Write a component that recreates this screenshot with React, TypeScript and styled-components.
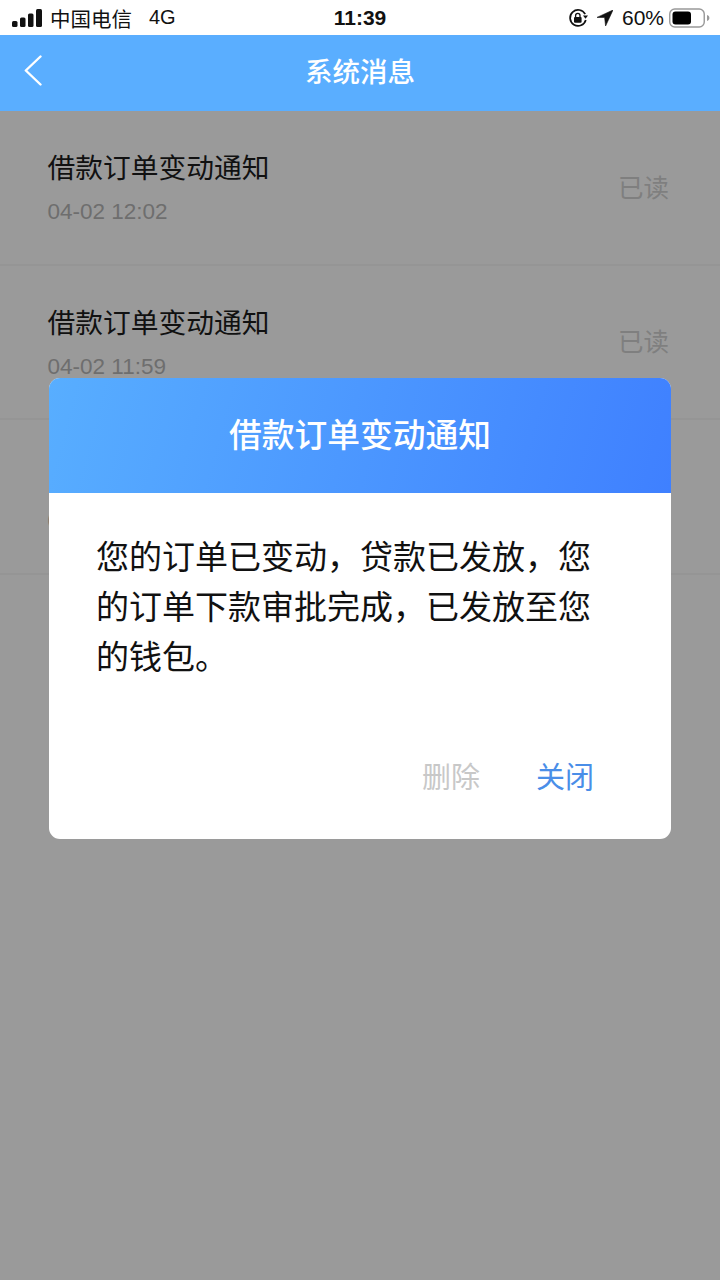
import React from "react";
import styled, { createGlobalStyle } from "styled-components";

const FONT = `"Liberation Sans", "Noto Sans CJK SC", sans-serif`;

const Global = createGlobalStyle`
  html, body { margin: 0; padding: 0; background: #9a9a9a; }
  * { box-sizing: border-box; }
`;

const Page = styled.div`
  position: relative;
  width: 720px;
  height: 1280px;
  overflow: hidden;
  display: flex;
  flex-direction: column;
  font-family: ${FONT};
`;

const StatusBar = styled.div`
  height: 35px;
  background: #fff;
  display: grid;
  grid-template-columns: 1fr auto 1fr;
  align-items: center;
  padding: 0 9px 0 12px;
  color: #111;
`;

const StatusSide = styled.div<{ $end?: boolean }>`
  display: flex;
  align-items: center;
  justify-content: ${({ $end }) => ($end ? "flex-end" : "flex-start")};
`;

const Carrier = styled.span`
  margin-left: 8px;
  font-size: 20.5px;
`;

const Network = styled.span`
  margin-left: 17px;
  font-size: 20px;
`;

const Clock = styled.span`
  margin-right: 3px;
  font-size: 21px;
  font-weight: 700;
`;

const Percent = styled.span`
  margin: 0 5px 0 9px;
  font-size: 21px;
`;

const NavBar = styled.header`
  height: 76px;
  background: #5aaeff;
  display: flex;
  align-items: center;
  justify-content: center;
  position: relative;
`;

const BackIcon = styled.svg`
  position: absolute;
  left: 22px;
  top: 19px;
`;

const NavTitle = styled.h1`
  margin: 0 0 6px;
  color: #fff;
  font-size: 27.5px;
  font-weight: 500;
`;

const List = styled.main`
  flex: 1;
  background: #9a9a9a;
`;

const Row = styled.div`
  height: 154.5px;
  padding: 0 51px 4px 47.5px;
  border-bottom: 2px solid #959595;
  display: flex;
  align-items: center;
  justify-content: space-between;
`;

const RowText = styled.div`
  display: flex;
  flex-direction: column;
  gap: 13px;
  margin-top: 7px;
`;

const RowTitle = styled.div`
  font-size: 27.75px;
  line-height: 34px;
  color: #111;
`;

const RowTime = styled.div`
  font-size: 22.5px;
  line-height: 26px;
  color: #6e6e6e;
`;

const RowState = styled.div`
  font-size: 25.5px;
  color: #7f7f7f;
`;

const Modal = styled.section`
  position: absolute;
  left: 49px;
  top: 378px;
  width: 622px;
  height: 461px;
  background: #fff;
  border-radius: 11px;
  overflow: hidden;
  display: flex;
  flex-direction: column;
`;

const ModalHead = styled.div`
  height: 115px;
  padding-bottom: 6px;
  background: linear-gradient(105deg, #58aeff 0%, #3f80ff 100%);
  color: #fff;
  font-size: 32.75px;
  font-weight: 500;
  display: flex;
  align-items: center;
  justify-content: center;
`;

const ModalBody = styled.p`
  margin: 0;
  padding: 40px 48px 0 47px;
  flex: 1;
  font-size: 33px;
  line-height: 50px;
  color: #111;
`;

const ModalActions = styled.div`
  display: flex;
  justify-content: flex-end;
  gap: 56px;
  padding: 0 77px 43px 0;
  font-size: 29px;
  line-height: 36px;
`;

const Action = styled.span<{ $primary?: boolean }>`
  color: ${({ $primary }) => ($primary ? "#4a8ee8" : "#c8c8c8")};
`;

const rows = [
  { title: "借款订单变动通知", time: "04-02 12:02" },
  { title: "借款订单变动通知", time: "04-02 11:59" },
  { title: "系统消息通知", time: "04-02 11:50" },
];

export default function App() {
  return (
    <Page>
      <Global />
      <StatusBar>
        <StatusSide>
          <svg width="30" height="18" viewBox="0 0 30 18" fill="#111">
            <rect x="0" y="12" width="5.5" height="6" rx="1.5" />
            <rect x="8" y="8.5" width="5.5" height="9.5" rx="1.5" />
            <rect x="16" y="4.5" width="5.5" height="13.5" rx="1.5" />
            <rect x="24" y="0" width="6" height="18" rx="1.5" />
          </svg>
          <Carrier>中国电信</Carrier>
          <Network>4G</Network>
        </StatusSide>
        <Clock>11:39</Clock>
        <StatusSide $end>
          <svg width="20" height="20" viewBox="0 0 20 20" fill="none">
            <path d="M17.2 6.2A8 8 0 1 0 17.8 12" stroke="#111" strokeWidth="1.7" />
            <path d="M15 7.6h5l-2.5 3.2z" fill="#111" />
            <rect x="6" y="9" width="7.6" height="5.8" rx="1" fill="#111" />
            <path d="M7.6 9V7.6a2.2 2.2 0 0 1 4.4 0V9" stroke="#111" strokeWidth="1.3" />
          </svg>
          <svg width="16" height="16" viewBox="0 0 16 16" style={{ marginLeft: 9 }}>
            <path d="M16 0 0 7.4h7.6l1 8.6z" fill="#111" stroke="#111" strokeWidth="0.6" />
          </svg>
          <Percent>60%</Percent>
          <svg width="42" height="20" viewBox="0 0 42 20">
            <rect x="0.75" y="1" width="34.5" height="18" rx="5" fill="none" stroke="#999" strokeWidth="1.4" />
            <rect x="3.5" y="3.5" width="18.5" height="13" rx="3" fill="#000" />
            <path d="M38 7c1.6.4 2.4 1.6 2.4 3s-.8 2.6-2.4 3z" fill="#999" />
          </svg>
        </StatusSide>
      </StatusBar>
      <NavBar>
        <BackIcon width="22" height="32" viewBox="0 0 22 32" fill="none">
          <path d="M18.5 2.5 3.8 16.5 18.5 30.5" stroke="#fff" strokeWidth="2.4" strokeLinecap="round" strokeLinejoin="round" />
        </BackIcon>
        <NavTitle>系统消息</NavTitle>
      </NavBar>
      <List>
        {rows.map((row) => (
          <Row key={row.time}>
            <RowText>
              <RowTitle>{row.title}</RowTitle>
              <RowTime>{row.time}</RowTime>
            </RowText>
            <RowState>已读</RowState>
          </Row>
        ))}
      </List>
      <Modal>
        <ModalHead>借款订单变动通知</ModalHead>
        <ModalBody>您的订单已变动，贷款已发放，您的订单下款审批完成，已发放至您的钱包。</ModalBody>
        <ModalActions>
          <Action>删除</Action>
          <Action $primary>关闭</Action>
        </ModalActions>
      </Modal>
    </Page>
  );
}
